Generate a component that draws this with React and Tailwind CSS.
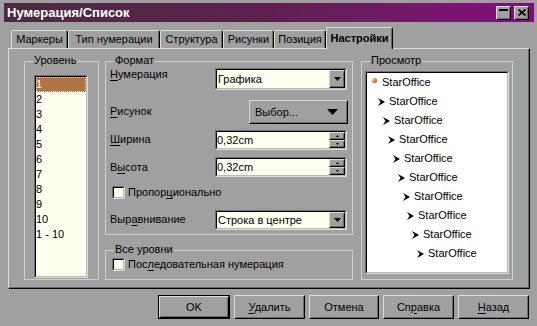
import React from "react";

const U = ({ children }) => (
  <span className="underline decoration-1 underline-offset-[2px]">{children}</span>
);

function Raised({ className = "", innerClassName = "", children }) {
  return (
    <div
      className={
        "border border-t-[#d4e0d4] border-l-[#d4e0d4] border-r-black border-b-black bg-[#a0a0a0] " +
        className
      }
    >
      <div
        className={
          "h-full w-full border border-t-transparent border-l-transparent border-r-[#6a6a6a] border-b-[#6a6a6a] " +
          innerClassName
        }
      >
        {children}
      </div>
    </div>
  );
}

function Sunken({ className = "", innerClassName = "", children }) {
  return (
    <div
      className={
        "border border-t-[#6e6e6e] border-l-[#6e6e6e] border-r-[#d4e0d4] border-b-[#d4e0d4] " +
        className
      }
    >
      <div
        className={
          "h-full w-full border border-t-black border-l-black border-r-[#b4bcb4] border-b-[#b4bcb4] " +
          innerClassName
        }
      >
        {children}
      </div>
    </div>
  );
}

function DownTri({ w = 7, h = 4 }) {
  return (
    <svg width={w} height={h} viewBox={`0 0 ${w} ${h}`} className="block">
      <polygon points={`0,0 ${w},0 ${w / 2},${h}`} fill="black" />
    </svg>
  );
}

function Combo({ text, h }) {
  return (
    <Sunken
      className={"w-[132px] " + h}
      innerClassName="bg-[#fffff0] flex items-stretch"
    >
      <div className="flex-1 flex items-center pl-[1px] whitespace-nowrap">{text}</div>
      <Raised className="w-[16px]" innerClassName="flex items-center justify-center">
        <DownTri />
      </Raised>
    </Sunken>
  );
}

function Spin({ text }) {
  return (
    <Sunken className="w-[132px] h-[20px]" innerClassName="bg-[#fffff0] flex items-stretch">
      <div className="flex-1 flex items-center whitespace-nowrap">{text}</div>
      <div className="w-[16px] flex flex-col">
        <Raised className="h-[8px]" innerClassName="flex items-center justify-center">
          <svg width="3" height="2" viewBox="0 0 3 2" className="block">
            <polygon points="1.5,0 3,2 0,2" fill="black" />
          </svg>
        </Raised>
        <Raised className="h-[8px]" innerClassName="flex items-center justify-center">
          <svg width="3" height="2" viewBox="0 0 3 2" className="block">
            <polygon points="0,0 3,0 1.5,2" fill="black" />
          </svg>
        </Raised>
      </div>
    </Sunken>
  );
}

function Check() {
  return <Sunken className="w-[13px] h-[13px] shrink-0" innerClassName="bg-[#fffff0]" />;
}

function Group({ title, className = "", children }) {
  return (
    <div className={"relative border border-[#c8d4c8] " + className}>
      <span className="absolute -top-[8px] left-[8px] px-[1px] bg-[#a0a0a0] leading-[13px]">
        {title}
      </span>
      {children}
    </div>
  );
}

function Arrow() {
  return (
    <svg width="7" height="8" viewBox="0 0 7 8" className="block shrink-0">
      <polygon points="0,0 7,4 0,8 2.5,4" fill="black" />
    </svg>
  );
}

const tabs = [
  { label: "Маркеры", w: "w-[57px]" },
  { label: "Тип нумерации", w: "w-[92px]" },
  { label: "Структура", w: "w-[63px]" },
  { label: "Рисунки", w: "w-[51px]" },
  { label: "Позиция", w: "w-[52px]" },
];

const levels = ["1", "2", "3", "4", "5", "6", "7", "8", "9", "10", "1 - 10"];

export default function App() {
  return (
    <div className="w-[537px] h-[326px] bg-[#a0a0a0] overflow-hidden text-black text-[11px] leading-[13px] font-['Liberation_Sans',Arial,sans-serif]">
      {/* Title bar */}
      <div className="ml-[4px] mt-[3px] w-[530px] h-[19px] flex items-center justify-between pl-[3px] pr-[5px] bg-gradient-to-r from-[#4b2b3d] via-[#5e2050] to-[#85087f]">
        <span className="text-white font-bold text-[13px] leading-[15px]">Нумерация/Список</span>
        <div className="flex gap-[3px]">
          <Raised className="w-[15px] h-[14px]" innerClassName="flex justify-center pt-[1px]">
            <div className="w-[9px] h-[2px] bg-black" />
          </Raised>
          <Raised className="w-[15px] h-[14px]" innerClassName="flex items-center justify-center">
            <svg width="8" height="7" viewBox="0 0 8 7" className="block">
              <path d="M0.5 0.5 L7.5 6.5 M7.5 0.5 L0.5 6.5" stroke="black" strokeWidth="1.6" />
            </svg>
          </Raised>
        </div>
      </div>

      {/* Tabs */}
      <div className="mt-[5px] pl-[11px] h-[21px] flex items-end">
        {tabs.map((t) => (
          <div
            key={t.label}
            className={
              t.w +
              " h-[18px] flex items-center justify-center whitespace-nowrap border-t border-l border-t-[#d4e0d4] border-l-[#d4e0d4] border-r border-r-black rounded-t-[2px] shadow-[inset_-1px_0_0_#6a6a6a]"
            }
          >
            {t.label}
          </div>
        ))}
        <div className="relative z-10 -mb-px w-[67px] h-[22px] flex items-center justify-center font-bold whitespace-nowrap bg-[#a0a0a0] border-t border-l border-t-[#d4e0d4] border-l-[#d4e0d4] border-r border-r-black rounded-t-[2px] shadow-[inset_-1px_0_0_#6a6a6a] pb-[1px]">
          Настройки
        </div>
      </div>

      {/* Panel */}
      <div className="ml-[8px] w-[522px] h-[241px] border-t border-l border-t-[#d4e0d4] border-l-[#d4e0d4] border-r border-b border-r-black border-b-black shadow-[inset_-1px_-1px_0_#6a6a6a] pt-[12px] pl-[15px] flex items-start">
        {/* Уровень */}
        <Group title="Уровень" className="w-[75px] h-[219px] shrink-0">
          <Sunken className="ml-[9px] mt-[13px] w-[54px] h-[203px]" innerClassName="bg-[#fffff0]">
            {levels.map((l, i) => (
              <div
                key={l}
                className={
                  "h-[15px] flex items-center whitespace-nowrap " +
                  (i === 0
                    ? "bg-[#b07444] text-white outline outline-1 outline-dotted outline-[#f0d0b0] -outline-offset-1"
                    : "")
                }
              >
                {l}
              </div>
            ))}
          </Sunken>
        </Group>

        {/* Формат + Все уровни */}
        <div className="ml-[6px] w-[248px] flex flex-col shrink-0">
          <Group title="Формат" className="h-[174px]">
            <div className="flex flex-col pl-[4px] pr-[5px] pt-[6px]">
              <div className="flex justify-between h-[22px]">
                <span>
                  <U>Н</U>умерация
                </span>
                <Combo text="Графика" h="h-[22px]" />
              </div>
              <div className="flex justify-between mt-[10px] h-[24px] -mr-[1px]">
                <span className="mt-[5px]">
                  <U>Р</U>исунок
                </span>
                <Raised className="w-[99px] h-[24px]" innerClassName="flex items-center justify-between pl-[4px] pr-[8px]">
                  <span>Выбор...</span>
                  <DownTri w={11} h={6} />
                </Raised>
              </div>
              <div className="flex justify-between mt-[6px] h-[20px]">
                <span className="mt-[3px]">
                  <U>Ш</U>ирина
                </span>
                <Spin text="0,32cm" />
              </div>
              <div className="flex justify-between mt-[7px] h-[20px]">
                <span className="mt-[4px]">
                  В<U>ы</U>сота
                </span>
                <Spin text="0,32cm" />
              </div>
              <div className="flex items-center mt-[9px] h-[13px] pl-[2px]">
                <Check />
                <span className="ml-[3px]">
                  Пропор<U>ц</U>ионально
                </span>
              </div>
              <div className="flex justify-between mt-[11px] h-[20px]">
                <span className="mt-[3px]">
                  Выр<U>а</U>внивание
                </span>
                <Combo text="Строка в центре" h="h-[20px]" />
              </div>
            </div>
          </Group>
          <Group title="Все уровни" className="mt-[15px] h-[30px]">
            <div className="flex items-center pt-[7px] pl-[6px]">
              <Check />
              <span className="ml-[3px]">
                Пос<U>л</U>едовательная нумерация
              </span>
            </div>
          </Group>
        </div>

        {/* Просмотр */}
        <Group title="Просмотр" className="ml-[8px] w-[152px] h-[219px] shrink-0">
          <Sunken className="ml-[3px] mt-[9px] w-[144px] h-[203px]" innerClassName="bg-white">
            <div className="h-[19px] flex items-center pl-[5px]">
              <div className="w-[5px] h-[5px] rounded-full bg-[radial-gradient(circle_at_35%_35%,#ffd080,#e06020_60%,#a02010)] -mt-[4px] shrink-0" />
              <span className="ml-[5px]">StarOffice</span>
            </div>
            {Array.from({ length: 9 }).map((_, i) => (
              <div
                key={i}
                className="h-[19px] flex items-center"
                style={{ paddingLeft: Math.round(11 + i * 4.9) }}
              >
                <Arrow />
                <span className="ml-[4px]">StarOffice</span>
              </div>
            ))}
          </Sunken>
        </Group>
      </div>

      {/* Buttons */}
      <div className="ml-[158px] mt-[6px] flex gap-[4px]">
        <div className="w-[72px] h-[24px] border border-black">
          <Raised className="h-full" innerClassName="flex items-center justify-center">
            OK
          </Raised>
        </div>
        <Raised className="w-[71px] h-[24px]" innerClassName="flex items-center justify-center">
          <span>
            <U>У</U>далить
          </span>
        </Raised>
        <Raised className="w-[70px] h-[24px]" innerClassName="flex items-center justify-center">
          Отмена
        </Raised>
        <Raised className="w-[71px] h-[24px]" innerClassName="flex items-center justify-center">
          <span>
            Сп<U>р</U>авка
          </span>
        </Raised>
        <Raised className="w-[71px] h-[24px]" innerClassName="flex items-center justify-center">
          <span>
            <U>Н</U>азад
          </span>
        </Raised>
      </div>
    </div>
  );
}
